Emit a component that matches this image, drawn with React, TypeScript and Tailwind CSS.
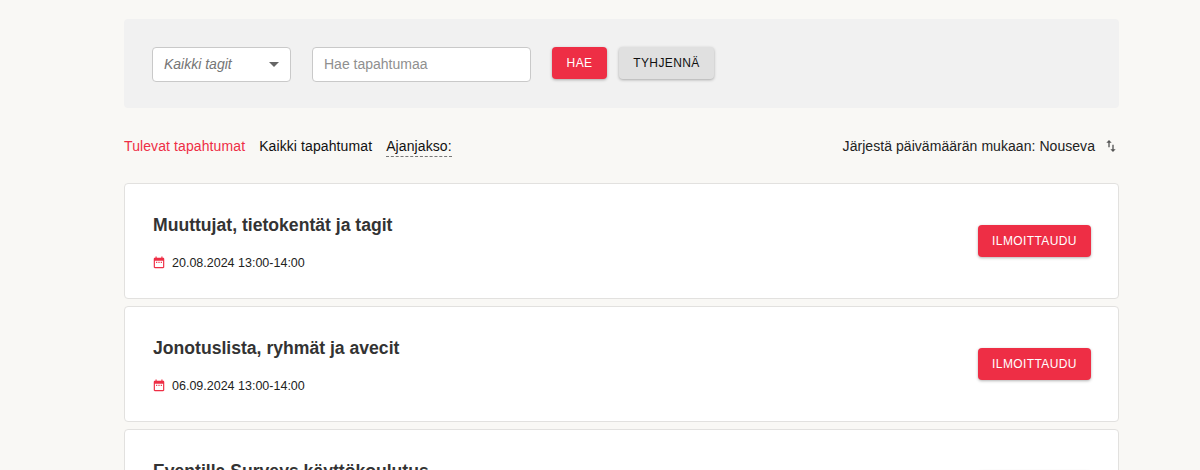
import React from 'react';

const font = { fontFamily: '"Liberation Sans", Arial, sans-serif' };

const CalendarIcon: React.FC = () => (
  <svg width="14" height="14" viewBox="0 0 24 24" fill="#ee2e45" className="-ml-px shrink-0">
    <path d="M19 3h-1V1h-2v2H8V1H6v2H5c-1.1 0-2 .9-2 2v14c0 1.1.9 2 2 2h14c1.1 0 2-.9 2-2V5c0-1.1-.9-2-2-2zm0 16H5V8h14v11zM7 10h2v2H7zm4 0h2v2h-2zm4 0h2v2h-2z" />
  </svg>
);

const SortIcon: React.FC = () => (
  <svg width="16" height="16" viewBox="0 0 24 24" fill="#555555" className="shrink-0">
    <path d="M16 17.01V10h-2v7.01h-3L15 21l4-3.99h-3zM9 3 5 6.99h3V14h2V6.99h3L9 3z" />
  </svg>
);

const events = [
  { title: 'Muuttujat, tietokentät ja tagit', date: '20.08.2024 13:00-14:00' },
  { title: 'Jonotuslista, ryhmät ja avecit', date: '06.09.2024 13:00-14:00' },
  { title: 'Eventilla Surveys käyttökoulutus', date: '12.09.2024 13:00-14:00' },
];

const EventCard: React.FC<{ title: string; date: string }> = ({ title, date }) => (
  <div className="flex h-[116px] shrink-0 items-center justify-between rounded border border-[#e2e1df] bg-white pl-[28px] pr-[27px]">
    <div className="pt-[3px]">
      <h3 className="text-[17.6px] leading-[22px] font-bold text-[#333333]">{title}</h3>
      <div className="mt-[19px] flex items-center gap-[6px] text-[12.5px] leading-[16px] text-[#222222]">
        <CalendarIcon />
        <span>{date}</span>
      </div>
    </div>
    <button className="h-[32px] w-[113px] rounded bg-[#ee2e45] text-[12px] tracking-[0.4px] text-white shadow-[0_1px_3px_rgba(0,0,0,0.3)]">
      ILMOITTAUDU
    </button>
  </div>
);

export default function App() {
  return (
    <div className="h-[470px] overflow-hidden bg-[#f9f8f5] pl-[124px] pr-[81px] pt-[19px]" style={font}>
      <div className="flex h-[89px] items-start gap-[21px] rounded-sm bg-[#f1f1f1] pl-[28px] pt-[28px]">
        <div className="flex h-[35px] w-[139px] items-center justify-between rounded border border-[#c9c9c9] bg-white pl-[11px] pr-[11px]">
          <span className="text-[14px] italic text-[#757575]">Kaikki tagit</span>
          <span className="h-0 w-0 border-x-[5px] border-t-[5px] border-x-transparent border-t-[#666666]" />
        </div>
        <div className="flex h-[35px] w-[219px] items-center rounded border border-[#c9c9c9] bg-white pl-[11px]">
          <span className="text-[14px] text-[#8f8f8f]">Hae tapahtumaa</span>
        </div>
        <div className="flex gap-[12px]">
          <button className="h-[32px] w-[55px] rounded bg-[#ee2e45] text-[12px] tracking-[0.4px] text-white shadow-[0_1px_3px_rgba(0,0,0,0.3)]">
            HAE
          </button>
          <button className="h-[32px] w-[95px] rounded bg-[#e0e0e0] text-[12px] tracking-[0.4px] text-[#111111] shadow-[0_1px_3px_rgba(0,0,0,0.3)]">
            TYHJENNÄ
          </button>
        </div>
      </div>

      <div className="mt-[28px] flex h-[20px] items-center justify-between text-[14px] leading-[20px]">
        <div className="flex items-center gap-[14px] tracking-[0.1px]">
          <span className="text-[#ee2e45]">Tulevat tapahtumat</span>
          <span className="text-[#111111]">Kaikki tapahtumat</span>
          <span className="border-b border-dashed border-[#777777] text-[#111111]">Ajanjakso:</span>
        </div>
        <div className="flex items-center gap-[8px] text-[#222222]">
          <span className="tracking-[0.05px]">Järjestä päivämäärän mukaan: Nouseva</span>
          <SortIcon />
        </div>
      </div>

      <div className="mt-[27px] flex flex-col gap-[7px]">
        {events.map((e) => (
          <EventCard key={e.title} title={e.title} date={e.date} />
        ))}
      </div>
    </div>
  );
}
